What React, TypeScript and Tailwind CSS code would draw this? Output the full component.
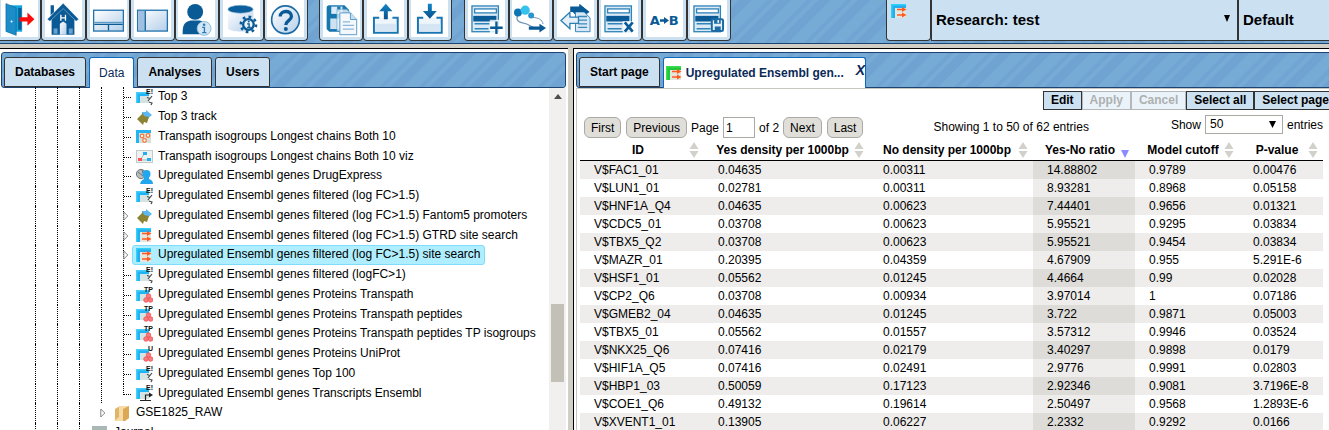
import React, { useState } from "react";
import type { ReactNode } from "react";

const stripes =
  "bg-[repeating-linear-gradient(135deg,#76abd6_0px,#76abd6_10px,#71a4d3_11px,#71a4d3_14px,#76abd6_15px,#76abd6_18px,#70a3d2_19px,#70a3d2_27px,#76abd6_28px)]";

/* ---------- toolbar drawings ---------- */

const NAVY = "#0a5a96";

function Tool({ children }: { children: ReactNode }) {
  return (
    <svg viewBox="0 0 112 112" className="h-[37px] w-[37px] bg-white" aria-hidden="true">
      <defs>
        <linearGradient id="pale" x1="0" y1="0" x2="1" y2="1">
          <stop offset="0" stopColor="#fff" />
          <stop offset="1" stopColor="#b5cfea" />
        </linearGradient>
        <linearGradient id="deep" x1="0" y1="0" x2="0" y2="1">
          <stop offset="0" stopColor="#1186c8" />
          <stop offset="1" stopColor="#0a4f8c" />
        </linearGradient>
      </defs>
      {children}
    </svg>
  );
}

const Sheet = () => (
  <>
    <rect x="12" y="18" width="80" height="78" fill="#dbeaf6" stroke="#2f84b8" strokeWidth="4" />
    <rect x="20" y="27" width="66" height="12" fill="#fff" stroke="#2f84b8" strokeWidth="4" />
    <rect x="16" y="48" width="70" height="17" fill="#0a5a96" />
    <path d="M20 72h45M20 87h42" stroke="#2f84b8" strokeWidth="5" />
  </>
);

const tools: Record<string, ReactNode> = {
  exit: (
    <>
      <path d="M20 16h44v80H20z" fill="#15a6dd" />
      <path d="M52 24h10v66H52z" fill="#0b5c93" />
      <path d="M15 11l31 13v83L15 95z" fill="#1b8dc9" stroke="#0c6399" strokeWidth="2" />
      <circle cx="32" cy="65" r="3" fill="#fff" />
      <path d="M56 52h24V38l21 20-21 20V65H56z" fill="#fb0d0d" />
    </>
  ),
  home: (
    <>
      <path d="M17 16h10v22l-10 8z" fill={NAVY} />
      <path d="M20 58l35-35 34 35v47H20z" fill={NAVY} />
      <path d="M45 72l10-7 10 7v33H45z" fill="url(#pale)" />
      <path d="M26 86h12v16H26zM72 86h12v16H72z" fill="#6aa0cc" />
      <path d="M55 10L7 58l8 6 40-38 39 38 8-6z" fill={NAVY} stroke="#fff" strokeWidth="1" />
      <path d="M48 45v18M62 45v18M48 54h14" stroke="#fff" strokeWidth="4" />
    </>
  ),
  rows: (
    <>
      <rect x="11" y="31" width="90" height="63" fill="url(#pale)" stroke="#2473ad" strokeWidth="4" />
      <path d="M13 68h86" stroke="#5b9dc9" strokeWidth="4" />
      <path d="M13 74h86M56 74v18" stroke={NAVY} strokeWidth="4" />
    </>
  ),
  columns: (
    <>
      <rect x="11" y="31" width="90" height="63" fill="url(#pale)" stroke="#2473ad" strokeWidth="4" />
      <path d="M13 33h19v59H13z" fill="#9fc0e2" />
      <path d="M34 33v59" stroke={NAVY} strokeWidth="4" />
    </>
  ),
  user: (
    <>
      <circle cx="52" cy="36" r="24" fill={NAVY} />
      <path d="M14 104c0-26 2-36 24-42h28c20 6 24 18 24 42z" fill={NAVY} />
      <circle cx="79" cy="86" r="21" fill="#d5e6f4" stroke="#8ebbd9" strokeWidth="3" />
      <circle cx="79" cy="75" r="4" fill="#2a7fb5" />
      <path d="M73 83h7v16m-7 0h13" fill="none" stroke="#2a7fb5" strokeWidth="4" />
    </>
  ),
  database: (
    <>
      <path d="M15 28v57c0 14 77 14 77 0V28z" fill="url(#pale)" />
      <ellipse cx="53" cy="28" rx="38" ry="12" fill="#0a5f9c" stroke="#8bb6d8" strokeWidth="2" />
      <circle cx="77" cy="74" r="16" fill="#eaf3fa" stroke={NAVY} strokeWidth="7" />
      <circle cx="77" cy="74" r="23" fill="none" stroke={NAVY} strokeWidth="8" strokeDasharray="8 10" />
      <path d="M73 72h6v11m-6 0h11" fill="none" stroke={NAVY} strokeWidth="4" />
      <circle cx="78" cy="65" r="3" fill={NAVY} />
    </>
  ),
  help: (
    <>
      <circle cx="56" cy="60" r="42" fill="url(#pale)" stroke="#1c6ba5" strokeWidth="5" />
      <path d="M40 50c0-20 34-20 34-1 0 14-17 13-17 27" fill="none" stroke={NAVY} strokeWidth="10" />
      <circle cx="57" cy="88" r="6" fill={NAVY} />
    </>
  ),
  copy: (
    <>
      <path d="M11 24q0-8 8-8h46l14 14v58q0 8-8 8H19l-8-8z" fill="#1676ae" />
      <path d="M25 20h34v22H25z" fill="#dcebf7" />
      <path d="M43 20h10v16H43z" fill="#1676ae" />
      <path d="M22 56h44v32H22z" fill="#cfe2f2" />
      <path d="M42 28h30l14 14v52H42z" fill="#e8f2fa" stroke="#5b9dc9" strokeWidth="2" opacity="0.8" />
      <path d="M51 39h32l19 20v46H51z" fill="#f4f8fc" stroke="#5b9dc9" strokeWidth="3" />
      <path d="M83 39v20h19" fill="#c7deef" stroke="#5b9dc9" strokeWidth="3" />
      <path d="M60 66h22M60 77h34M60 88h34" stroke="#8ab8d9" strokeWidth="4" />
    </>
  ),
  upload: (
    <>
      <path d="M37 54H21v45h72V54H77" fill="#eef5fb" stroke="#1a76b3" strokeWidth="6" />
      <path d="M25 72h64v24H25z" fill="#d5e5f3" />
      <path d="M51 58V34H37l20-23 20 23H63v24z" fill="url(#deep)" />
    </>
  ),
  download: (
    <>
      <path d="M37 54H21v45h72V54H77" fill="#eef5fb" stroke="#1a76b3" strokeWidth="6" />
      <path d="M25 72h64v24H25z" fill="#d5e5f3" />
      <path d="M51 11v22H36l21 24 21-24H63V11z" fill="url(#deep)" />
    </>
  ),
  addRow: (
    <>
      <Sheet />
      <path d="M66 60h40v46H66z" fill="#fff" opacity="0.8" />
      <path d="M86 65v38M67 84h38" stroke={NAVY} strokeWidth="7" />
    </>
  ),
  workflow: (
    <>
      <path d="M20 42c-10 16-4 24 12 27 26 4 24 16 44 16" fill="none" stroke="#6f94b8" strokeWidth="4" />
      <path d="M64 53c14 0 28 6 30 20" fill="none" stroke="#6f94b8" strokeWidth="3" />
      <circle cx="18" cy="38" r="12" fill="#0e75b4" />
      <circle cx="40" cy="31" r="14" fill="#37c1ed" />
      <circle cx="58" cy="47" r="9" fill="#2a92cf" />
      <path d="M51 80h32v-8l20 13-20 13v-8H51z" fill={NAVY} />
    </>
  ),
  moveBack: (
    <>
      <path d="M40 28h28V12l30 24-30 22z" fill={NAVY} />
      <path d="M56 36h26l18 18v42H56z" fill="#d8e8f5" stroke="#3b88bd" strokeWidth="3" />
      <path d="M40 20h28V12l30 24H40z" fill={NAVY} />
      <path d="M64 50h27M64 61h27M64 72h27M64 83h27" stroke="#3b88bd" strokeWidth="4" />
      <path d="M12 62l27-25v15h26v19H39v16z" fill="#e5f0f9" stroke="#2a7fb5" strokeWidth="4" />
    </>
  ),
  deleteRow: (
    <>
      <Sheet />
      <path d="M66 64h40v42H66z" fill="#fff" opacity="0.8" />
      <path d="M72 68l24 28M96 68L72 96" stroke={NAVY} strokeWidth="8" />
    </>
  ),
  saveRow: (
    <>
      <Sheet />
      <rect x="66" y="58" width="34" height="36" rx="4" fill="#e4f0f9" stroke="#1c6ba5" strokeWidth="6" />
      <path d="M73 60h20v12H73zM75 80h18v13H75z" fill="#1c6ba5" />
      <path d="M83 61h5v8h-5z" fill="#fff" />
    </>
  ),
};

const toolGroups = [
  {
    style: "ml-[-3px] w-[311px]",
    items: [
      ["exit", "Log out"],
      ["home", "Home"],
      ["rows", "Stacked layout"],
      ["columns", "Side layout"],
      ["user", "User info"],
      ["database", "Database settings"],
      ["help", "Help"],
    ],
  },
  {
    style: "ml-[11px] w-[133px]",
    items: [
      ["copy", "Save a copy"],
      ["upload", "Export"],
      ["download", "Import"],
    ],
  },
  {
    style: "ml-[12px] w-[267px]",
    items: [
      ["addRow", "Add row"],
      ["workflow", "Workflow"],
      ["moveBack", "Move back"],
      ["deleteRow", "Delete row"],
      ["rename", "Rename"],
      ["saveRow", "Save table"],
    ],
  },
];

/* ---------- tree icons ---------- */

type Kind =
  | "ensembl" | "track" | "isogroups" | "diagram" | "drug" | "sites"
  | "tp" | "uniprot" | "transcripts" | "folder" | "journal" | "sitesGreen";

const MiniTable = () => (
  <>
    <path d="M4 6h9v8H4z" fill="#d5e3e2" />
    <path d="M0 3h13v4H4v7H0z" fill="#1fb4f5" />
    <path d="M0 3h13v1.500H1.500V14H0z" fill="#45cdfb" />
  </>
);

const Tag = ({ children }: { children: string }) => (
  <text x="17" y="5" textAnchor="end" fontSize="7" fontWeight="700" fontFamily="Liberation Sans, sans-serif" fill="#111">
    {children}
  </text>
);

const Balls = () => (
  <g fill="#ff7a7c" stroke="#e8484e" strokeWidth="0.7">
    <circle cx="12.5" cy="9" r="2.3" />
    <circle cx="10" cy="13" r="2.3" />
    <circle cx="14.6" cy="13" r="2.3" />
  </g>
);

function Sites({ color, edge }: { color: string; edge: string }) {
  return (
    <>
      <path d="M4 5h11v10H4z" fill="#e2e6df" />
      <path d="M0 1h15v4H4v10H0z" fill={color} />
      <path d="M0 1h15v1.500H1.500V15H0z" fill={edge} />
      <path d="M6 6.500h6M6 12h6" stroke="#ff5a1e" strokeWidth="1.5" />
      <path d="M11 4l4.500 2.500L11 9zM11 9.500l4.500 2.500-4.500 2.500z" fill="#ff5a1e" />
    </>
  );
}

const kinds: Record<Kind, ReactNode> = {
  ensembl: (
    <>
      <MiniTable />
      <Tag>E!</Tag>
      <path d="M16 7l-4 5M11 8.500l3 1M13 13l3 1-1 2" fill="none" stroke="#444" strokeWidth="1.2" />
    </>
  ),
  track: (
    <>
      <path d="M6 3h4V1l6 5-6 5V9H6z" fill="#5ab9f2" />
      <path d="M1 10l6-6 1 3 5 1-2 6-3-1-1 3z" fill="#8c8435" />
    </>
  ),
  isogroups: (
    <>
      <path d="M0 1h15v13H0z" fill="#d9e0da" />
      <path d="M0 1h15v3H3v10H0z" fill="#22b4f3" />
      <g fill="#fff" stroke="#f5793e" strokeWidth="1.3">
        <circle cx="6" cy="7" r="1.8" />
        <circle cx="12" cy="6.5" r="1.8" />
        <circle cx="8.5" cy="11.5" r="1.8" />
      </g>
    </>
  ),
  diagram: (
    <>
      <rect x="0.5" y="2.5" width="16" height="12" fill="#eef2f0" stroke="#c2cbc9" />
      <path d="M9 5L4 12h9" fill="none" stroke="#9bb" />
      <path d="M2 10h4v3H2z" fill="#ff5353" />
      <path d="M7 4h4v3H7zM11 10h4v3h-4z" fill="#22aef0" />
    </>
  ),
  drug: (
    <>
      <circle cx="5" cy="6" r="4.6" fill="#b9bcbc" stroke="#777" />
      <path d="M2 4l5 4M6 2l2 6" stroke="#6f7373" />
      <circle cx="10.5" cy="6" r="4" fill="#22a7ee" />
      <path d="M4 16q1-4 4-5V9h5v2q4 1 4 5z" fill="#22a7ee" />
    </>
  ),
  sites: <Sites color="#22aef0" edge="#2fd0fa" />,
  sitesGreen: <Sites color="#1fc93a" edge="#38dd50" />,
  tp: (
    <>
      <MiniTable />
      <Tag>TP</Tag>
      <Balls />
    </>
  ),
  uniprot: (
    <>
      <MiniTable />
      <Tag>U</Tag>
      <Balls />
    </>
  ),
  transcripts: (
    <>
      <MiniTable />
      <Tag>E!</Tag>
      <path d="M4 15.5h11M9.500 15v-5H14" fill="none" stroke="#222" strokeWidth="1.2" />
      <path d="M13 7.500l4 2.500-4 2.500z" fill="#222" />
    </>
  ),
  folder: (
    <>
      <path d="M1 4l5-3v12l-5 3z" fill="#e0b469" />
      <path d="M5 1h10v12l-4 3H0l5-4z" fill="#f6dba6" />
      <path d="M9 4l6-3v12l-4 3H9z" fill="#dba956" />
    </>
  ),
  journal: (
    <>
      <path d="M0 1h15v15H0z" fill="#a9b8b5" />
      <path d="M3 5h10v11H3z" fill="#e6edeb" />
    </>
  ),
};

function NodeIcon({ kind }: { kind: Kind }) {
  return (
    <svg viewBox="0 0 17 17" className="h-[17px] w-[17px] shrink-0" aria-hidden="true">
      {kinds[kind]}
    </svg>
  );
}

interface TreeNode {
  kind: Kind;
  label: string;
  open?: boolean;
  selected?: boolean;
}

const nodes: TreeNode[] = [
  { kind: "ensembl", label: "Top 3" },
  { kind: "track", label: "Top 3 track" },
  { kind: "isogroups", label: "Transpath isogroups Longest chains Both 10" },
  { kind: "diagram", label: "Transpath isogroups Longest chains Both 10 viz" },
  { kind: "drug", label: "Upregulated Ensembl genes DrugExpress" },
  { kind: "ensembl", label: "Upregulated Ensembl genes filtered (log FC>1.5)" },
  { kind: "track", label: "Upregulated Ensembl genes filtered (log FC>1.5) Fantom5 promoters", open: true },
  { kind: "sites", label: "Upregulated Ensembl genes filtered (log FC>1.5) GTRD site search", open: true },
  { kind: "sites", label: "Upregulated Ensembl genes filtered (log FC>1.5) site search", open: true, selected: true },
  { kind: "ensembl", label: "Upregulated Ensembl genes filtered (logFC>1)" },
  { kind: "tp", label: "Upregulated Ensembl genes Proteins Transpath" },
  { kind: "tp", label: "Upregulated Ensembl genes Proteins Transpath peptides" },
  { kind: "tp", label: "Upregulated Ensembl genes Proteins Transpath peptides TP isogroups" },
  { kind: "uniprot", label: "Upregulated Ensembl genes Proteins UniProt" },
  { kind: "ensembl", label: "Upregulated Ensembl genes Top 100" },
  { kind: "transcripts", label: "Upregulated Ensembl genes Transcripts Ensembl" },
];

const treeRow = "flex h-5 items-stretch nth-[4n]:h-[19px]";

function Guides({ count }: { count: number }) {
  return (
    <>
      {Array.from({ length: count }, (_, i) => (
        <span key={i} className="w-[22px] shrink-0 border-l border-dotted border-black" />
      ))}
    </>
  );
}

function Arrow() {
  return (
    <svg viewBox="0 0 6 10" className="-ml-px h-[10px] w-[6px] shrink-0 self-center" aria-hidden="true">
      <path d="M.8 1l4 4-4 4z" fill="#fff" stroke="#777" strokeWidth="0.9" />
    </svg>
  );
}

function NodeLink({ kind, label, selected }: TreeNode) {
  return (
    <a
      href="#node"
      className={
        "flex items-center gap-[5px] rounded-[3px] border px-[3px] whitespace-nowrap " +
        (selected ? "border-[#7fdcfa] bg-[#aeeefe]" : "border-transparent")
      }
    >
      <NodeIcon kind={kind} />
      <span className="pb-[2px]">{label}</span>
    </a>
  );
}

function Tree() {
  return (
    <ul className="-mt-px min-w-0 flex-1 overflow-hidden pl-[35px]">
      {nodes.map((n, i) => {
        const last = i === nodes.length - 1;
        return (
          <li key={i} className={treeRow}>
            <Guides count={4} />
            <span className={"flex w-[9px] shrink-0 border-l border-dotted border-black " + (last ? "h-[11px]" : "")}>
              {n.open ? (
                <Arrow />
              ) : (
                <span className={"w-[7px] border-b border-dotted border-black " + (last ? "h-full" : "h-[11px]")} />
              )}
            </span>
            <NodeLink {...n} />
          </li>
        );
      })}
      <li className={treeRow}>
        <Guides count={3} />
        <span className="flex w-[9px] shrink-0">
          <Arrow />
        </span>
        <NodeLink kind="folder" label="GSE1825_RAW" />
      </li>
      <li className={treeRow}>
        <Guides count={2} />
        <span className="w-[9px] shrink-0 border-l border-dotted border-black" />
        <NodeLink kind="journal" label="Journal" />
      </li>
    </ul>
  );
}

/* ---------- results table ---------- */

const columns = ["ID", "Yes density per 1000bp", "No density per 1000bp", "Yes-No ratio", "Model cutoff", "P-value"];
const widths = ["w-[124px]", "w-[165px]", "w-[164px]", "w-[102px]", "w-[104px]", "w-[84px]"];

const results = [
  ["V$FAC1_01", "0.04635", "0.00311", "14.88802", "0.9789", "0.00476"],
  ["V$LUN1_01", "0.02781", "0.00311", "8.93281", "0.8968", "0.05158"],
  ["V$HNF1A_Q4", "0.04635", "0.00623", "7.44401", "0.9656", "0.01321"],
  ["V$CDC5_01", "0.03708", "0.00623", "5.95521", "0.9295", "0.03834"],
  ["V$TBX5_Q2", "0.03708", "0.00623", "5.95521", "0.9454", "0.03834"],
  ["V$MAZR_01", "0.20395", "0.04359", "4.67909", "0.955", "5.291E-6"],
  ["V$HSF1_01", "0.05562", "0.01245", "4.4664", "0.99", "0.02028"],
  ["V$CP2_Q6", "0.03708", "0.00934", "3.97014", "1", "0.07186"],
  ["V$GMEB2_04", "0.04635", "0.01245", "3.722", "0.9871", "0.05003"],
  ["V$TBX5_01", "0.05562", "0.01557", "3.57312", "0.9946", "0.03524"],
  ["V$NKX25_Q6", "0.07416", "0.02179", "3.40297", "0.9898", "0.0179"],
  ["V$HIF1A_Q5", "0.07416", "0.02491", "2.9776", "0.9991", "0.02803"],
  ["V$HBP1_03", "0.50059", "0.17123", "2.92346", "0.9081", "3.7196E-8"],
  ["V$COE1_Q6", "0.49132", "0.19614", "2.50497", "0.9568", "1.2893E-6"],
  ["V$XVENT1_01", "0.13905", "0.06227", "2.2332", "0.9292", "0.0166"],
];

function SortMark({ active }: { active: boolean }) {
  return (
    <svg viewBox="0 0 10 16" className="absolute top-[2px] right-[5px] h-4 w-[10px]" aria-hidden="true">
      {active ? (
        <path d="M1 8h8l-4 8z" fill="#8a8cff" />
      ) : (
        <path d="M5 0l4.500 7h-9zM.5 9h9L5 16z" fill="#d2d0cb" />
      )}
    </svg>
  );
}

function Results() {
  return (
    <table className="w-full table-fixed border-collapse">
      <colgroup>
        {widths.map((w) => (
          <col key={w} className={w} />
        ))}
      </colgroup>
      <thead>
        <tr className="h-5 border-b border-black">
          {columns.map((c) => (
            <th key={c} scope="col" className="relative p-0 pr-[18px] pl-[10px] text-center leading-[18px] font-bold whitespace-nowrap">
              {c}
              <SortMark active={c === "Yes-No ratio"} />
            </th>
          ))}
        </tr>
      </thead>
      <tbody>
        {results.map((r, y) => (
          <tr key={y} className="h-[18px] odd:bg-[#eeedeb]">
            {r.map((v, x) => (
              <td
                key={x}
                className={
                  "p-0 pl-[14px] leading-[18px] " + (x === 3 ? (y % 2 ? "bg-[#eeedeb]" : "bg-[#dddcd8]") : "")
                }
              >
                {v}
              </td>
            ))}
          </tr>
        ))}
      </tbody>
    </table>
  );
}

/* ---------- controls ---------- */

const tabBar = "flex h-9 shrink-0 gap-[3px] rounded-[3px] border border-[#1d4471] px-[2px] pt-1 " + stripes;
const tabOff = "h-[30px] rounded-t-[3px] border border-[#333] bg-[#cbe1f2] px-[10px] font-bold";
const tabOn = "h-[31px] rounded-t-[3px] border border-b-0 border-[#1066b8] bg-white px-[9px]";
const pager = "h-[21px] rounded-md border border-[#aaa9a4] bg-[#dfded9] px-[6px]";
const bigSelect = "h-[41px] w-full appearance-none rounded-none border border-t-0 border-[#333] bg-[#cbe1f2] pl-1 text-[15px] font-bold";

function EditButton({ children, disabled }: { children: string; disabled?: boolean }) {
  return (
    <button
      disabled={disabled}
      className={
        "h-[19px] border px-[7px] leading-[17px] font-bold whitespace-nowrap " +
        (disabled ? "border-[#b5b8ba] bg-[#eaf3fa] text-[#aeb0b0]" : "border-[#333] bg-[#cbe1f2]")
      }
    >
      {children}
    </button>
  );
}

export default function App() {
  const [page, setPage] = useState("1");
  return (
    <div className="flex h-screen flex-col overflow-hidden bg-[#d2cfc6] font-['Liberation_Sans',Arial,sans-serif] text-[12px] leading-[18px] text-black">
      <header className={"flex h-11 shrink-0 items-start overflow-hidden border-b border-[#1d4471] " + stripes}>
        {toolGroups.map((g, i) => (
          <div key={i} className={"flex shrink-0 " + g.style}>
            {g.items.map(([id, label]) => (
              <button
                key={id}
                aria-label={label}
                className="flex h-[41px] min-w-0 flex-1 justify-center rounded-b-[4px] border border-t-0 border-[#333] bg-[#cbe1f2]"
              >
                {id === "rename" ? (
                  <span className="flex h-[37px] w-[37px] shrink-0 items-center justify-center bg-white pt-1 font-['DejaVu_Sans',sans-serif] text-[13px] font-bold text-[#0a5a96]">
                    A
                    <svg viewBox="0 0 9 7" className="h-[7px] w-[9px]" aria-hidden="true">
                      <path d="M0 2.300h4V0l5 3.500L4 7V4.700H0z" fill="#0a5a96" />
                    </svg>
                    B
                  </span>
                ) : (
                  <span className="shrink-0">
                    <Tool>{tools[id]}</Tool>
                  </span>
                )}
              </button>
            ))}
          </div>
        ))}
        <div className="ml-auto flex w-[443px] shrink-0">
          <button aria-label="Perspective" className="h-[41px] w-[45px] shrink-0 rounded-b-[4px] border border-t-0 border-[#333] bg-[#cbe1f2] pt-[2px] pl-1">
            <span className="flex h-[37px]">
              <NodeIcon kind="sites" />
            </span>
          </button>
          <div className="relative flex-1">
            <select aria-label="Project" className={bigSelect}>
              <option>Research: test</option>
            </select>
            <svg viewBox="0 0 6 7" className="pointer-events-none absolute top-[15px] right-[8px] h-[7px] w-[6px]" aria-hidden="true">
              <path d="M0 0h6L3 7z" />
            </svg>
          </div>
          <div className="w-[91px] shrink-0">
            <select aria-label="Perspective name" className={bigSelect + " border-r-0"}>
              <option>Default</option>
            </select>
          </div>
        </div>
      </header>

      <main className="mt-1 flex min-h-0 flex-1 gap-[5px]">
        <section className="flex w-[568px] shrink-0 flex-col border-t border-black bg-white pt-[3px] pr-[2px] pl-[1px]">
          <nav className={tabBar}>
            <button className={tabOff}>Databases</button>
            <button className={tabOn + " text-[#0b2a57]"}>Data</button>
            <button className={tabOff}>Analyses</button>
            <button className={tabOff}>Users</button>
          </nav>
          <div className="flex min-h-0 flex-1">
            <div className="ml-[-1px] flex min-w-0 flex-1">
              <Tree />
            </div>
            <div className="flex w-[17px] shrink-0 flex-col items-center bg-[#f1f0ee] pt-[6px]">
              <svg viewBox="0 0 8 5" className="h-[5px] w-2" aria-hidden="true">
                <path d="M0 5l4-5 4 5z" fill="#4d4d4d" />
              </svg>
              <div className="mt-[205px] h-[78px] w-[13px] shrink-0 bg-[#c3c0b8]" />
            </div>
          </div>
        </section>

        <section className="flex min-w-0 flex-1 flex-col overflow-hidden border-t border-l border-black bg-white pt-[3px] pl-[2px]">
          <nav className={tabBar + " mr-[-4px]"}>
            <button className={tabOff}>Start page</button>
            <div className="flex h-[31px] rounded-t-[3px] border border-b-0 border-[#1066b8] bg-white pl-[2px] font-bold text-[#0b2a57]">
              <button className="flex items-center gap-[3px]">
                <NodeIcon kind="sitesGreen" />
                Upregulated Ensembl gen...
              </button>
              <button aria-label="Close tab" className="ml-3 self-start pt-[3px] text-[14px] text-[#0b2a57] italic">
                X
              </button>
            </div>
          </nav>
          <div className="min-h-0 flex-1 overflow-hidden border-t border-l border-[#c8c6c0] pt-[2px] pl-[3px]">
            <div className="mr-[-8px] flex justify-end">
              <EditButton>Edit</EditButton>
              <EditButton disabled>Apply</EditButton>
              <EditButton disabled>Cancel</EditButton>
              <EditButton>Select all</EditButton>
              <EditButton>Select page</EditButton>
            </div>
            <div className="mr-[6px] flex h-[30px] items-start justify-between">
              <div className="mt-[7px] ml-1 flex items-center">
                <button className={pager}>First</button>
                <button className={pager + " ml-[5px]"}>Previous</button>
                <label htmlFor="page" className="ml-1">
                  Page
                </label>
                <input
                  id="page"
                  value={page}
                  onChange={(e) => setPage(e.target.value)}
                  className="ml-1 h-[21px] w-8 border border-[#aaa9a4] bg-white px-[2px]"
                />
                <span className="ml-1">of 2</span>
                <button className={pager + " ml-1"}>Next</button>
                <button className={pager + " ml-[5px]"}>Last</button>
              </div>
              <p className="mt-[8px] mr-3">Showing 1 to 50 of 62 entries</p>
              <label className="mt-[5px] flex items-center">
                Show
                <span className="relative mx-1 flex">
                  <select className="h-[19px] w-[78px] appearance-none border border-[#aaa9a4] bg-white px-1 leading-[17px]">
                    <option>50</option>
                  </select>
                  <svg viewBox="0 0 7 7" className="pointer-events-none absolute top-[6px] right-[7px] h-[7px] w-[7px]" aria-hidden="true">
                    <path d="M0 0h7L3.500 7z" />
                  </svg>
                </span>
                entries
              </label>
            </div>
            <div className="mr-[6px]">
              <Results />
            </div>
          </div>
        </section>
      </main>
    </div>
  );
}
